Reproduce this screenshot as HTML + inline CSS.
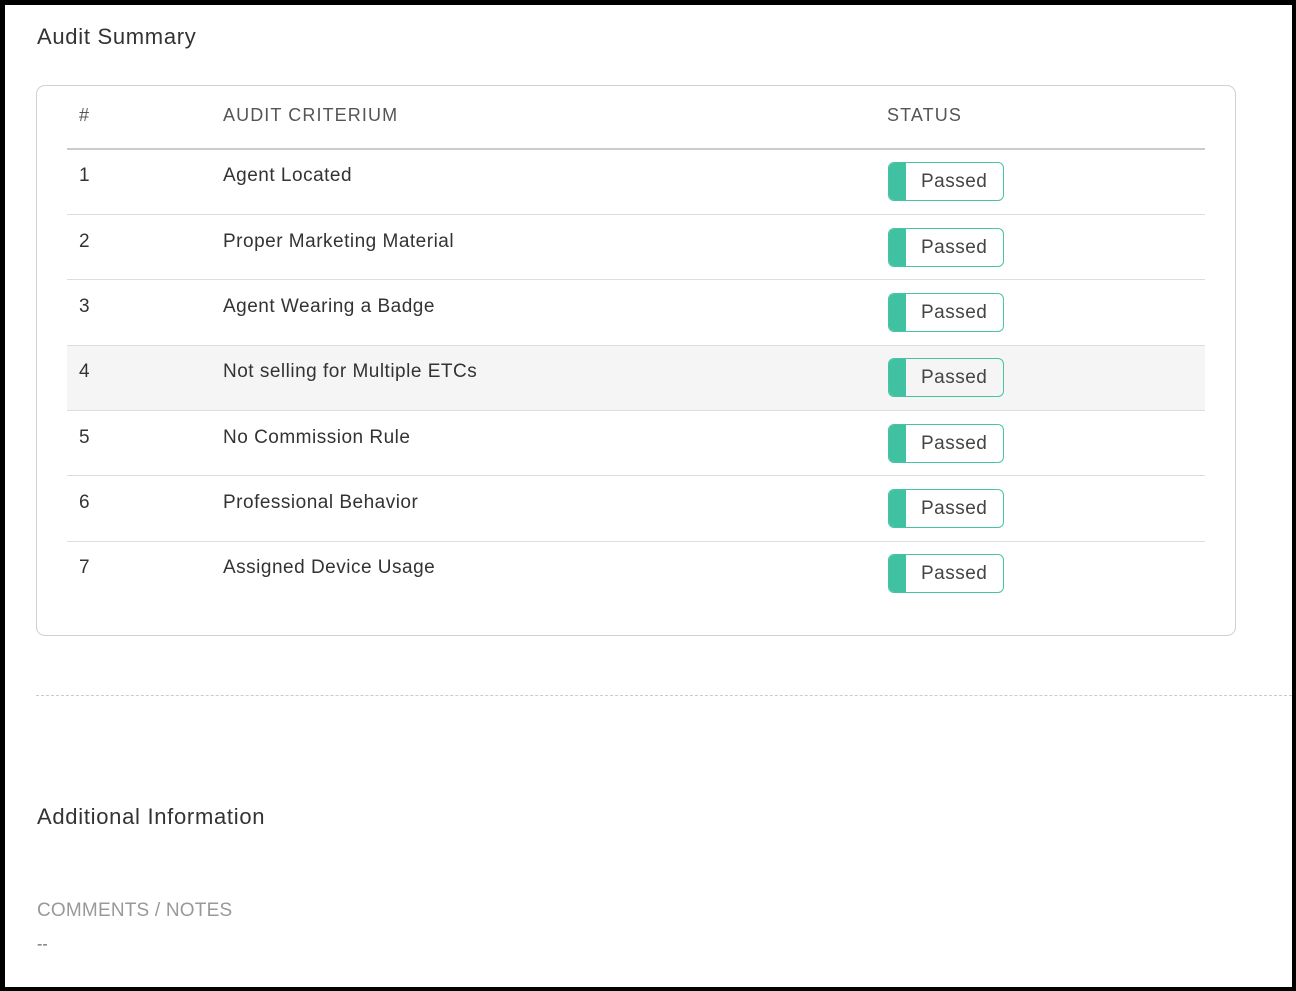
<!DOCTYPE html>
<html><head><meta charset="utf-8"><style>
body{margin:0;width:1296px;height:991px;position:relative;background:#fff;font-family:"Liberation Sans",Arial,sans-serif;overflow:hidden}
.frame{position:absolute;left:0;top:0;width:1296px;height:991px;box-sizing:border-box;border-left:5px solid #000;border-top:5px solid #000;border-right:4px solid #000;border-bottom:4px solid #000}
.t{position:absolute;white-space:nowrap}
.h{font-size:22px;color:#333;letter-spacing:0.7px}
.box{position:absolute;left:36px;top:85px;width:1198px;height:549px;border:1px solid #d0d0d0;border-radius:9px}
.th{font-size:18px;color:#555;letter-spacing:1.1px}
.c{font-size:19px;color:#333;letter-spacing:0.5px}
.line{position:absolute;left:67px;width:1138px;height:1px;background:#ddd}
.badge{position:absolute;left:888px;width:116px;height:39px;border:1px solid #48c4a4;border-radius:6px;overflow:hidden;box-sizing:border-box}
.badge:before{content:"";position:absolute;left:0;top:0;bottom:0;width:17px;background:#40c1a2}
.badge span{position:absolute;left:32px;top:8px;font-size:19px;color:#444;letter-spacing:0.5px}
</style></head><body>
<div class="frame"></div>
<div class="t h" style="left:37px;top:24px">Audit Summary</div>
<div class="box"></div>
<div class="t th" style="left:79px;top:105px">#</div>
<div class="t th" style="left:223px;top:105px">AUDIT CRITERIUM</div>
<div class="t th" style="left:887px;top:105px">STATUS</div>
<div class="line" style="top:148px;height:2px;background:#ccc"></div>
<div style="position:absolute;left:67px;top:346px;width:1138px;height:64px;background:#f5f5f5"></div>
<div class="line" style="top:214px"></div>
<div class="line" style="top:279px"></div>
<div class="line" style="top:345px"></div>
<div class="line" style="top:410px"></div>
<div class="line" style="top:475px"></div>
<div class="line" style="top:541px"></div>

<div class="t c" style="left:79px;top:165px">1</div><div class="t c" style="left:223px;top:165px">Agent Located</div><div class="badge" style="top:162px"><span>Passed</span></div>
<div class="t c" style="left:79px;top:231px">2</div><div class="t c" style="left:223px;top:231px">Proper Marketing Material</div><div class="badge" style="top:228px"><span>Passed</span></div>
<div class="t c" style="left:79px;top:296px">3</div><div class="t c" style="left:223px;top:296px">Agent Wearing a Badge</div><div class="badge" style="top:293px"><span>Passed</span></div>
<div class="t c" style="left:79px;top:361px">4</div><div class="t c" style="left:223px;top:361px">Not selling for Multiple ETCs</div><div class="badge" style="top:358px"><span>Passed</span></div>
<div class="t c" style="left:79px;top:427px">5</div><div class="t c" style="left:223px;top:427px">No Commission Rule</div><div class="badge" style="top:424px"><span>Passed</span></div>
<div class="t c" style="left:79px;top:492px">6</div><div class="t c" style="left:223px;top:492px">Professional Behavior</div><div class="badge" style="top:489px"><span>Passed</span></div>
<div class="t c" style="left:79px;top:557px">7</div><div class="t c" style="left:223px;top:557px">Assigned Device Usage</div><div class="badge" style="top:554px"><span>Passed</span></div>

<div style="position:absolute;left:36px;top:695px;width:1256px;border-top:1px dashed #ccc"></div>
<div class="t h" style="left:37px;top:804px">Additional Information</div>
<div class="t" style="left:37px;top:900px;font-size:19px;color:#999;letter-spacing:0.2px">COMMENTS / NOTES</div>
<div class="t" style="left:37px;top:936px;font-size:16px;color:#666">--</div>
</body></html>
